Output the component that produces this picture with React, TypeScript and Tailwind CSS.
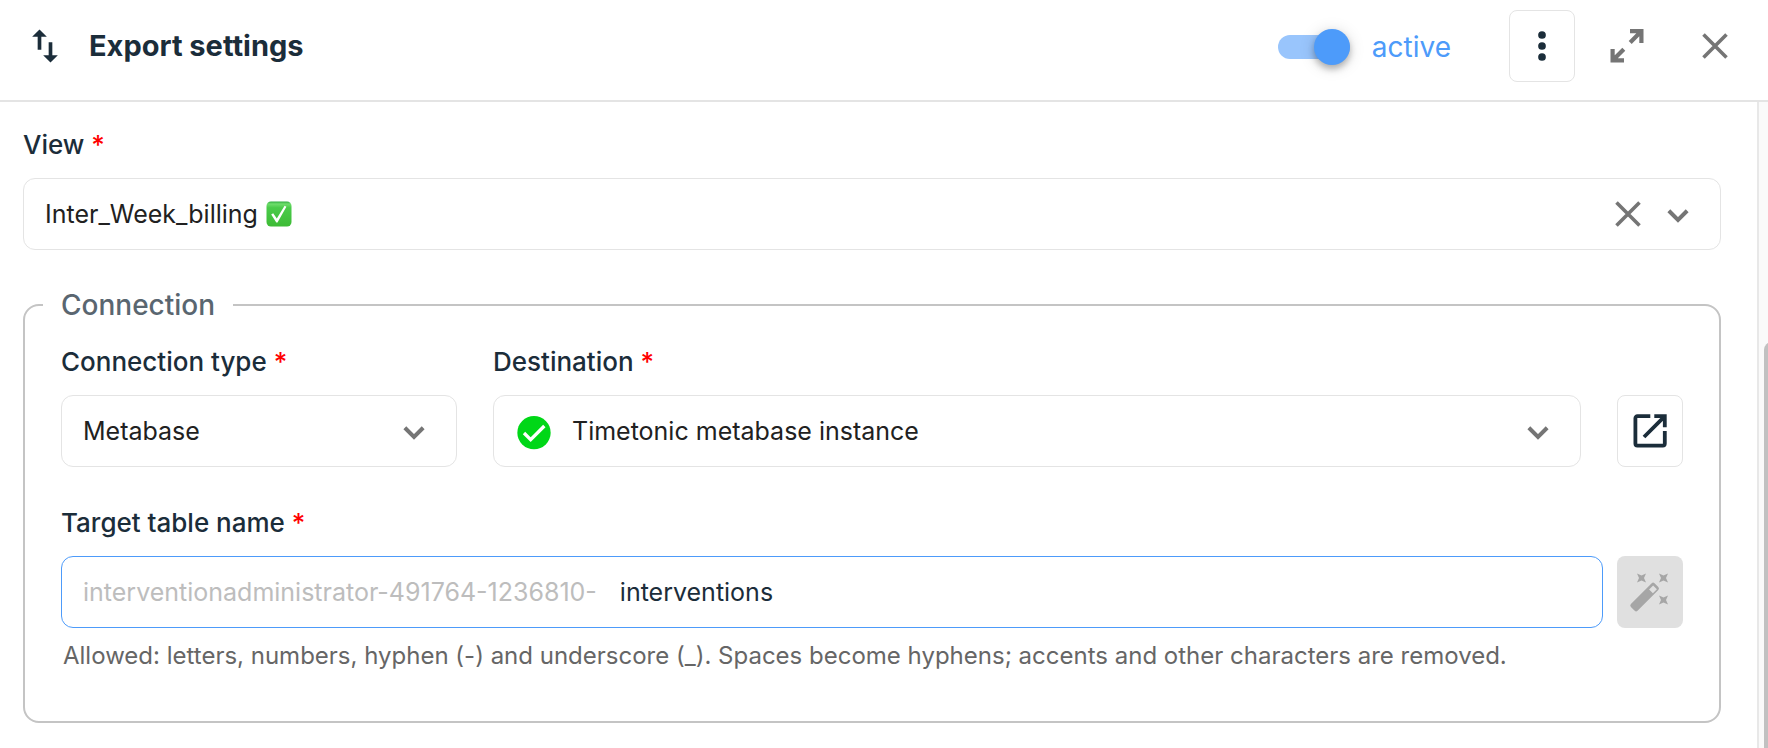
import type { ReactNode } from 'react';

interface FieldLabelProps {
  htmlFor: string;
  children: ReactNode;
}

function FieldLabel({ htmlFor, children }: FieldLabelProps) {
  return (
    <label htmlFor={htmlFor} className="block mb-[17px] text-[26px] leading-8 font-medium text-[#1b2d3a]">
      {children} <span className="text-[#ff0000]">*</span>
    </label>
  );
}

function ChevronIcon() {
  return (
    <svg viewBox="0 0 24 24" className="w-11 h-11 shrink-0 pointer-events-none" fill="none" stroke="#757575" strokeWidth="2.2">
      <path d="M7 10.2l5 5 5-5" />
    </svg>
  );
}

function CloseIcon() {
  return (
    <svg viewBox="0 0 44 44" className="w-11 h-11" fill="none" stroke="#757575" strokeWidth="3.6">
      <path d="M10.500 10.500l23 23M33.500 10.500l-23 23" />
    </svg>
  );
}

function CheckEmoji() {
  return (
    <svg viewBox="0 0 26 26" className="w-[26px] h-[26px] shrink-0">
      <defs>
        <linearGradient id="check-bg" x1="0" y1="0" x2="0" y2="1">
          <stop offset="0" stopColor="#2fae3f" />
          <stop offset="0.1" stopColor="#6fdd6c" />
          <stop offset="0.25" stopColor="#4acb4a" />
          <stop offset="1" stopColor="#3dbb35" />
        </linearGradient>
      </defs>
      <rect x="0.5" y="0.5" width="25" height="25" rx="4.5" fill="url(#check-bg)" />
      <path d="M5.2 13.6l2-1.4 3.6 5.2L18.6 4.8l1.8 1L11.5 21.5h-1.2z" fill="#fff" />
    </svg>
  );
}

export default function App() {
  return (
    <div className="flex flex-col h-screen overflow-hidden bg-white font-['Inter',sans-serif] text-[#212121]">
      <header className="flex items-center pt-2.5 pb-[18px] pl-[23px] pr-[31px] border-b-2 border-[#e4e4e4]">
        <svg viewBox="0 0 24 24" className="w-11 h-11" fill="#1b2d3a">
          <path d="M9 3L5 6.99h3V14h2V6.99h3L9 3zm7 14.01V10h-2v7.01h-3L15 21l4-3.99h-3z" />
        </svg>
        <h1 className="ml-[22px] text-[29px] leading-9 font-bold text-[#1b2d3a]">Export settings</h1>

        <label className="flex items-center gap-[22px] ml-auto pt-0.5 text-[28px] leading-9 text-[#4d9bfa] cursor-pointer">
          <input type="checkbox" role="switch" defaultChecked className="peer sr-only" />
          <span className="flex items-center justify-end w-[72px] h-6 rounded-full bg-[#99c5fc]">
            <span className="w-9 h-9 rounded-full bg-[#4d9bfa] shadow-[0_4px_6px_rgba(0,0,0,0.25),0_2px_16px_rgba(0,0,0,0.15)]" />
          </span>
          active
        </label>

        <button type="button" aria-label="More options" className="flex items-center justify-center w-[66px] h-[72px] ml-[58px] rounded-lg border border-[#e4e4e4]">
          <svg viewBox="0 0 24 24" className="w-11 h-11" fill="#1b2d3a">
            <circle cx="12" cy="6" r="2.1" />
            <circle cx="12" cy="12" r="2.1" />
            <circle cx="12" cy="18" r="2.1" />
          </svg>
        </button>
        <button type="button" aria-label="Expand" className="ml-[30px]">
          <svg viewBox="0 0 44 44" className="w-11 h-11" fill="none" stroke="#757575" strokeWidth="4.2">
            <path d="M25 7.100h11.400v11.900M36 7.600L25.200 18.400M19 36.400H7.600V25M8 36l10.800-10.800" />
          </svg>
        </button>
        <button type="button" aria-label="Close" className="ml-11">
          <CloseIcon />
        </button>
      </header>

      <div className="flex flex-1 min-h-0">
        <main className="flex-1 min-w-0 pl-[23px] pr-9 pt-[27px]">
          <FieldLabel htmlFor="view">View</FieldLabel>
          <div className="flex items-center h-[72px] pl-[21px] pr-5 rounded-xl border border-[#e4e4e4]">
            <select id="view" className="appearance-none field-sizing-content text-[25px] leading-8 outline-none">
              <option>Inter_Week_billing</option>
            </select>
            <span className="ml-2">
              <CheckEmoji />
            </span>
            <button type="button" aria-label="Clear view" className="ml-auto mr-1.5">
              <CloseIcon />
            </button>
            <ChevronIcon />
          </div>

          <fieldset className="mt-[37px] px-9 pb-[49px] rounded-2xl border-2 border-[#c4c4c4]">
            <legend className="-ml-[18px] px-[18px] text-[28px] leading-9 font-medium text-[#5a6670]">Connection</legend>

            <div className="flex items-end mt-[23px]">
              <div className="w-[396px]">
                <FieldLabel htmlFor="connection-type">Connection type</FieldLabel>
                <div className="grid items-center h-[72px] rounded-xl border border-[#e4e4e4]">
                  <select id="connection-type" className="col-start-1 row-start-1 w-full h-full appearance-none pl-[21px] pr-16 text-[25px] leading-8 outline-none">
                    <option>Metabase</option>
                  </select>
                  <div className="col-start-1 row-start-1 justify-self-end mr-5 pointer-events-none">
                    <ChevronIcon />
                  </div>
                </div>
              </div>

              <div className="flex-1 min-w-0 ml-9">
                <FieldLabel htmlFor="destination">Destination</FieldLabel>
                <div className="flex items-center h-[72px] px-5 rounded-xl border border-[#e4e4e4]">
                  <svg viewBox="0 -1 24 24" className="w-10 h-10 shrink-0">
                    <circle cx="12" cy="12" r="10" fill="#00d717" />
                    <path d="M6 12.2l4 4 8.2-8.2" fill="none" stroke="#fff" strokeWidth="2" />
                  </svg>
                  <select id="destination" className="flex-1 min-w-0 ml-[18px] appearance-none text-[25px] leading-8 outline-none">
                    <option>Timetonic metabase instance</option>
                  </select>
                  <ChevronIcon />
                </div>
              </div>

              <button type="button" aria-label="Open destination" className="flex items-center justify-center w-[66px] h-[72px] ml-9 rounded-lg border border-[#e4e4e4]">
                <svg viewBox="0 0 34 34" className="w-[34px] h-[34px]" fill="none" stroke="#1b2d3a" strokeWidth="3.8">
                  <path d="M17.3 2.2H4.4a2 2 0 0 0-2 2v25.4a2 2 0 0 0 2 2h25.4a2 2 0 0 0 2-2V17M21.3 2.2h10.5v11M31.4 2.6L11 23" />
                </svg>
              </button>
            </div>

            <div className="mt-10">
              <FieldLabel htmlFor="table-name">Target table name</FieldLabel>
              <div className="flex items-center">
                <div className="flex items-center flex-1 h-[72px] pl-[21px] pr-5 rounded-xl border border-[#4d9bfa] text-[25px] leading-8">
                  <span className="text-[#bdbdbd]">interventionadministrator-491764-1236810-</span>
                  <input id="table-name" type="text" defaultValue="interventions" className="flex-1 min-w-0 ml-[23px] text-[#1b2d3a] outline-none" />
                </div>
                <button type="button" disabled aria-label="Generate name" className="flex items-center justify-center w-[66px] h-[72px] ml-3.5 rounded-lg bg-[#e0e0e0]">
                  <svg viewBox="0 0 44 44" className="w-11 h-11" fill="#a6a6a6">
                    <path
                      fillRule="evenodd"
                      transform="translate(-0.7 1.5)"
                      d="M3.6 32.6L24.4 11.8a2 2 0 0 1 2.8 0l3.8 3.8a2 2 0 0 1 0 2.8L10.2 39.2a2 2 0 0 1-2.8 0L3.6 35.4a2 2 0 0 1 0-2.8zM25.8 14l-4 4 3.8 3.8 4-4z"
                    />
                    <path d="M9 3.500l4.500 2 4.500-2-2 4.500 2 4.500-4.500-2-4.500 2 2-4.500z" />
                    <path d="M31 3.500l4.500 2 4.500-2-2 4.500 2 4.500-4.500-2-4.500 2 2-4.500z" />
                    <path d="M31 25.500l4.500 2 4.500-2-2 4.500 2 4.500-4.500-2-4.500 2 2-4.500z" />
                  </svg>
                </button>
              </div>
              <p className="mt-3 ml-0.5 text-[24px] leading-8 text-[#666666]">
                Allowed: letters, numbers, hyphen (-) and underscore (_). Spaces become hyphens; accents and other characters are removed.
              </p>
            </div>
          </fieldset>
        </main>

        {/* Scrollbar */}
        <div className="w-[11px] shrink-0 overflow-hidden border-l-2 border-[#e8e8e8] bg-[#fafafa] pt-[240px] pl-[5px]">
          <div className="w-4 h-full rounded-t-full bg-[#c1c1c1]" />
        </div>
      </div>
    </div>
  );
}
